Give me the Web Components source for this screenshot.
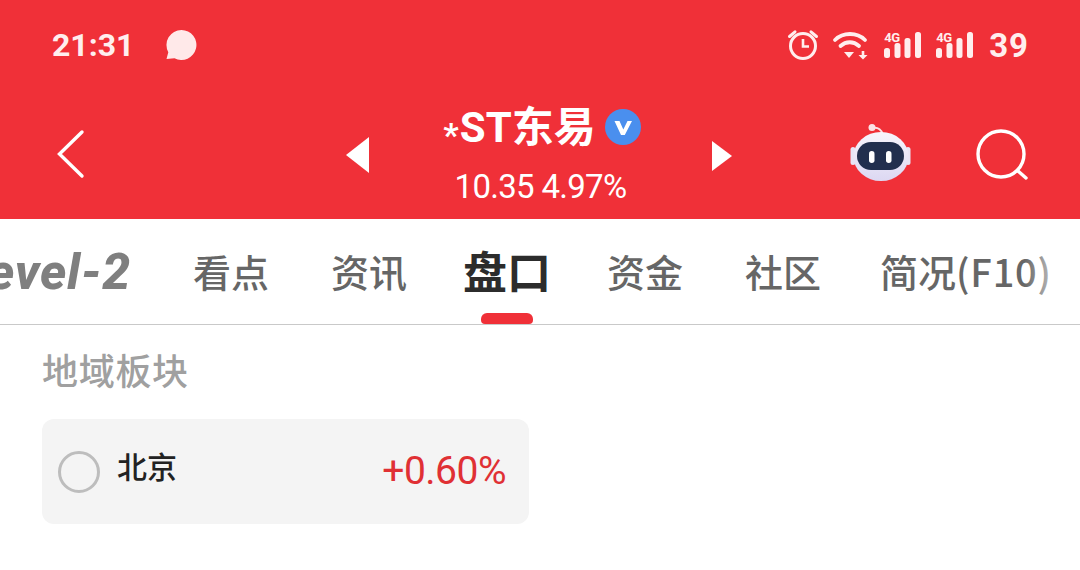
<!DOCTYPE html>
<html lang="zh"><head><meta charset="utf-8"><title>*ST东易</title>
<style>
html,body{margin:0;padding:0;background:#fff;width:1080px;height:570px;overflow:hidden}
body{font-family:"Noto Sans CJK SC","Roboto",sans-serif}
</style></head><body>
<app-top><status-bar></status-bar><stock-header></stock-header></app-top>
<tab-strip></tab-strip>
<sector-section heading="地域板块"><sector-card name="北京" change="+0.60%"></sector-card></sector-section>
<script>
function def(name,html){
  customElements.define(name,class extends HTMLElement{
    connectedCallback(){
      if(this.shadowRoot)return;
      const r=this.attachShadow({mode:'open'});
      r.innerHTML=typeof html==='function'?html(this):html;
    }
  });
}
const bars=`<svg width="37" height="26" viewBox="0 0 37 26" fill="#ffeeee"><rect x="0" y="16" width="6" height="10" rx="2.500"/><rect x="10.500" y="11" width="6" height="15" rx="2.500"/><rect x="20.500" y="6" width="6" height="20" rx="2.500"/><rect x="31" y="0" width="6" height="26" rx="2.500"/></svg>`;
def('app-top',`<style>:host{display:block;background:#f03038;height:219px;overflow:hidden}</style><slot></slot>`);
def('status-bar',`<style>
:host{display:flex;align-items:center;height:90px;padding:0 51px 0 52px;color:#ffeeee;font-family:Roboto,sans-serif;box-sizing:border-box}
.t{font-size:32px;font-weight:700;line-height:1}
.msg{margin-left:31px;display:block}
.sp{flex:1}
.ic{display:block;flex:none}
.g{position:relative;width:37px;height:26px;display:block;flex:none}
.g b{position:absolute;left:0;top:0;font:700 13px/12px Roboto,sans-serif;letter-spacing:-.4px}
.g svg{position:absolute;left:0;top:0}
.n{font-size:33px;font-weight:700;letter-spacing:1px;margin-left:16px;line-height:1}
.row{display:flex;align-items:center}
</style>
<span class="t">21:31</span>
<svg class="msg" width="32" height="32" viewBox="0 0 32 32"><path d="M16.500 1a15 15 0 1 1-7 28.300L1.500 30l1.800-6.800A15 15 0 0 1 16.500 1z" fill="#ffe9e9"/></svg>
<span class="sp"></span>
<div class="row">
<svg class="ic" width="32" height="32" viewBox="0 0 32 32" fill="none" stroke="#ffeeee"><circle cx="16" cy="17" r="12.500" stroke-width="3"/><path d="M16 10v7.500h6" stroke-width="2.600"/><path d="M2.500 7.500 8 2.800M29.500 7.500 24 2.800" stroke-width="3" stroke-linecap="round"/></svg>
<svg class="ic" style="margin-left:12px" width="38" height="30" viewBox="0 0 38 30" fill="none" stroke="#ffeeee" stroke-width="3.800" stroke-linecap="round"><path d="M4 10C12 2 26 2 34 10"/><path d="M9.500 16c5.500-5 13-5 18.500 0"/><path d="M13 22h10l-5 6z" fill="#ffeeee" stroke="none"/><path d="M32 21v5" stroke-width="2.600" stroke-linecap="butt"/><path d="M27.500 25h9L32 29.500z" fill="#ffeeee" stroke="none"/></svg>
<span class="g" style="margin-left:15px"><b>4G</b>${bars}</span>
<span class="g" style="margin-left:15px"><b>4G</b>${bars}</span>
<span class="n">39</span>
</div>`);
def('stock-header',`<style>
:host{display:flex;align-items:flex-start;height:129px;color:#fff;box-sizing:border-box}
.back{margin:39px 0 0 56px;flex:none;display:block}
.prev{margin:47px 0 0 260px;flex:none;display:block}
.mid{width:342px;flex:none;display:flex;flex-direction:column;align-items:center}
.name{display:flex;align-items:center;height:56px;margin-top:11px;font:700 42px/56px "Roboto","Noto Sans CJK SC",sans-serif;margin-left:2px}
.a{font-size:34px;position:relative;top:5px;margin-right:1px}
.name svg{margin-left:9px;display:block;position:relative;top:-2px}
.price{font:400 33px/42px Roboto,sans-serif;margin-top:9px;letter-spacing:-.7px;margin-right:1px}
.next{margin:51px 0 0 0;flex:none;display:block}
.bot{margin:34px 0 0 118px;flex:none;display:block}
.search{margin:38px 0 0 63px;flex:none;display:block}
</style>
<svg class="back" width="30" height="50" viewBox="0 0 30 50" fill="none" stroke="#fff" stroke-width="3.400" stroke-linecap="round"><path d="M26 3 3.500 25 26 47"/></svg>
<svg class="prev" width="24" height="36" viewBox="0 0 24 36"><path d="M0 18 23 0v36z" fill="#fff"/></svg>
<div class="mid"><div class="name"><span><span class="a">*</span>ST东易</span><svg width="36" height="36" viewBox="0 0 36 36"><circle cx="18" cy="18" r="18" fill="#4a8fee"/><path d="M9.500 12h5l3.800 8.500 4.200-8.500h4.500L19.800 26H16z" fill="#fff"/></svg></div>
<div class="price">10.35 4.97%</div></div>
<svg class="next" width="20" height="30" viewBox="0 0 20 30"><path d="M20 15 0 0v30z" fill="#fff"/></svg>
<svg class="bot" width="62" height="60" viewBox="0 0 62 60"><defs><linearGradient id="h" x1="0" y1="0" x2="0" y2="1"><stop offset="0" stop-color="#f8f5fc"/><stop offset="1" stop-color="#dcd8f2"/></linearGradient></defs><path d="M23 4c5-1 9 2 10 7" fill="none" stroke="#fbe3e6" stroke-width="2"/><circle cx="22" cy="3.500" r="3.500" fill="#fbe3e6"/><rect x="0.500" y="23" width="5" height="18" rx="2.500" fill="#e8e4f4"/><rect x="55.500" y="23" width="5" height="18" rx="2.500" fill="#e8e4f4"/><ellipse cx="31" cy="32.500" rx="27.500" ry="24.500" fill="url(#h)"/><rect x="7" y="18" width="47" height="28" rx="14" fill="#222f4e"/><rect x="19" y="27" width="5.500" height="12" rx="2.700" fill="#fff"/><rect x="36" y="27" width="5.500" height="12" rx="2.700" fill="#fff"/></svg>
<svg class="search" width="54" height="54" viewBox="0 0 54 54" fill="none" stroke="#fff" stroke-width="3.400" stroke-linecap="round"><circle cx="26" cy="26" r="23"/><path d="M43 43 51 50"/></svg>`);
def('tab-strip',`<style>
:host{display:flex;height:106px;box-sizing:border-box;border-bottom:1px solid #c9c9c9;overflow:hidden;background:#fff;position:relative;font-family:"Noto Sans CJK SC",sans-serif}
.tab{flex:none;width:138px;height:105px;display:flex;justify-content:center;align-items:center;padding-bottom:3px;box-sizing:border-box;font-size:38px;font-weight:500;color:#666;position:relative;white-space:nowrap}
.l2{width:162px;justify-content:flex-end;padding:0 31px 0 0;font:italic 800 50px/1 Roboto,sans-serif;color:#7f7f7f;letter-spacing:.8px}
.on{font-size:44px;font-weight:700;color:#2c2c2c}
.on::after{content:"";position:absolute;left:43px;bottom:0;width:52px;height:11px;background:#f03038;border-radius:6px 6px 4px 4px}
.last{width:228px;justify-content:flex-start;padding-left:28px}
.last span{letter-spacing:.8px}
.fade{position:absolute;top:0;bottom:0;right:0;width:56px;background:linear-gradient(to right,rgba(255,255,255,0),#fff 90%)}
</style>
<div class="tab l2">Level-2</div><div class="tab">看点</div><div class="tab">资讯</div><div class="tab on">盘口</div><div class="tab">资金</div><div class="tab">社区</div><div class="tab last">简况<span>(F10)</span></div><div class="fade"></div>`);
def('sector-section',el=>`<style>
:host{display:block;padding:19px 0 0 42px;background:#fff}
h2{margin:0 0 25px;font:500 36px/50px "Noto Sans CJK SC",sans-serif;letter-spacing:.7px;color:#a0a0a0}
</style><h2>${el.getAttribute('heading')}</h2><slot></slot>`);
def('sector-card',el=>`<style>
:host{display:flex;align-items:center;width:487px;height:105px;box-sizing:border-box;padding:0 23px 0 16px;background:#f4f4f4;border-radius:12px}
.r{width:42px;height:42px;box-sizing:border-box;border:3px solid #bdbdbd;border-radius:50%;flex:none}
.n{margin-left:17px;font:500 30px/44px "Noto Sans CJK SC",sans-serif;color:#222;position:relative;top:-7px}
.c{margin-left:auto;font:400 39px/44px Roboto,sans-serif;letter-spacing:-.5px;color:#e03034;position:relative;top:-1px}
</style><span class="r"></span><span class="n">${el.getAttribute('name')}</span><span class="c">${el.getAttribute('change')}</span>`);
</script>
</body></html>
